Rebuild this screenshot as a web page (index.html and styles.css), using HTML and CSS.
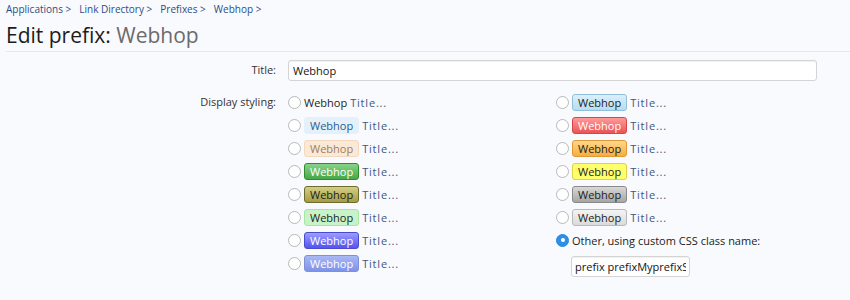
FILE: index.html
```html
<!DOCTYPE html>
<html>
<head>
<meta charset="utf-8">
<link rel="stylesheet" href="styles.css">
</head>
<body>
<div class="page">
  <nav class="crumbs">
    <a>Applications &gt;</a>
    <a>Link Directory &gt;</a>
    <a>Prefixes &gt;</a>
    <a>Webhop &gt;</a>
  </nav>
  <h1 class="title">Edit prefix: <span class="muted">Webhop</span></h1>
  <form class="form">
    <label class="lbl lbl-title">Title:</label>
    <div class="ctrl"><input class="text-in" type="text" value="Webhop"></div>

    <label class="lbl lbl-display">Display styling:</label>
    <div class="options">
      <div class="opt"><span class="radio"></span><span class="plain">Webhop</span><span class="tt">Title...</span></div>
      <div class="opt"><span class="radio"></span><span class="badge b-sky">Webhop</span><span class="tt">Title...</span></div>

      <div class="opt"><span class="radio"></span><span class="badge b-ltblue">Webhop</span><span class="tt">Title...</span></div>
      <div class="opt"><span class="radio"></span><span class="badge b-red">Webhop</span><span class="tt">Title...</span></div>

      <div class="opt"><span class="radio"></span><span class="badge b-peach">Webhop</span><span class="tt">Title...</span></div>
      <div class="opt"><span class="radio"></span><span class="badge b-orange">Webhop</span><span class="tt">Title...</span></div>

      <div class="opt"><span class="radio"></span><span class="badge b-green">Webhop</span><span class="tt">Title...</span></div>
      <div class="opt"><span class="radio"></span><span class="badge b-yellow">Webhop</span><span class="tt">Title...</span></div>

      <div class="opt"><span class="radio"></span><span class="badge b-olive">Webhop</span><span class="tt">Title...</span></div>
      <div class="opt"><span class="radio"></span><span class="badge b-gray">Webhop</span><span class="tt">Title...</span></div>

      <div class="opt"><span class="radio"></span><span class="badge b-ltgreen">Webhop</span><span class="tt">Title...</span></div>
      <div class="opt"><span class="radio"></span><span class="badge b-silver">Webhop</span><span class="tt">Title...</span></div>

      <div class="opt"><span class="radio"></span><span class="badge b-royal">Webhop</span><span class="tt">Title...</span></div>
      <div class="opt"><span class="radio checked"></span><span class="other">Other, using custom CSS class name:</span></div>

      <div class="opt"><span class="radio"></span><span class="badge b-periwinkle">Webhop</span><span class="tt">Title...</span></div>
      <div class="opt opt-custom"><input class="text-in custom-in" type="text" value="prefix prefixMyprefixSHOW"></div>
    </div>
  </form>
</div>
</body>
</html>
```

FILE: styles.css
```css
html, body {
  margin: 0;
  padding: 0;
  background: #f9fafd;
}
body {
  font-family: "Open Sans", "DejaVu Sans", sans-serif;
  font-size: 11px;
  color: #141414;
}
.page {
  padding: 3px 0 0 6px;
}
.crumbs {
  display: flex;
  gap: 8px;
  font-size: 10px;
  line-height: 13px;
  color: #2b4d86;
}
.title {
  margin: 6px 0 0 0;
  font-size: 21px;
  line-height: 26px;
  font-weight: normal;
  color: #1c1c1c;
  padding-bottom: 3px;
  border-bottom: 1px solid #dfecef;
}
.title .muted {
  color: #6b6b6b;
}
.form {
  display: grid;
  grid-template-columns: 270px 1fr;
  column-gap: 12px;
  row-gap: 0;
  margin-top: 8px;
  width: 810px;
}
.lbl {
  text-align: right;
  color: #333;
  line-height: 20px;
}
.lbl-display {
  margin-top: 12px;
  line-height: 18px;
}
.text-in {
  box-sizing: border-box;
  height: 21px;
  width: 529px;
  border: 1px solid #d4d4d4;
  border-radius: 3px;
  background: #fff;
  font-family: inherit;
  font-size: 11px;
  color: #141414;
  padding: 0 4px;
  box-shadow: inset 0 1px 1px rgba(0,0,0,0.06);
  outline: none;
}
.options {
  margin-top: 12px;
  display: grid;
  grid-template-columns: 268px 260px;
  grid-auto-rows: 23px;
}
.opt {
  display: flex;
  align-items: center;
  height: 18px;
}
.radio {
  box-sizing: border-box;
  width: 13px;
  height: 13px;
  border-radius: 50%;
  border: 1px solid #b9b9b9;
  background: #fff;
  margin-right: 2px;
  flex: none;
}
.radio.checked {
  background: #2d8fea;
  border-color: #2a86dc;
  display: flex;
  align-items: center;
  justify-content: center;
}
.radio.checked::after {
  content: "";
  width: 4px;
  height: 4px;
  border-radius: 50%;
  background: #fff;
}
.plain {
  margin: 0 3px 0 1px;
  color: #1c1c1c;
}
.tt {
  color: #3f5783;
  letter-spacing: 0.8px;
}
.other {
  margin-left: 1px;
  color: #1c1c1c;
}
.badge {
  box-sizing: border-box;
  height: 17px;
  line-height: 15px;
  padding: 0 5px;
  border: 1px solid transparent;
  border-radius: 3px;
  margin: 0 3px 0 1px;
  color: #1c1c1c;
}
.b-ltblue { background: #e4f1fb; border-color: #e4f1fb; color: #2b5a8d; }
.b-peach { background: #fbe9d8; border-color: #f4d8bd; color: #9d7d5f; }
.b-green { background: linear-gradient(#89d389, #45a845); border-color: #2f8c2f; color: #fff; }
.b-olive { background: linear-gradient(#d4cf85, #a39d45); border-color: #6f6b2c; color: #1c1c1c; }
.b-ltgreen { background: #c8f3c8; border-color: #a6e5a6; color: #1c1c1c; }
.b-royal { background: linear-gradient(#9c9cff, #5454f0); border-color: #4a4acc; color: #fff; }
.b-periwinkle { background: linear-gradient(#a9b8f5, #7d93e8); border-color: #7f90d6; color: #fff; }
.b-sky { background: linear-gradient(#dcf0fb, #b6dcf1); border-color: #8fbfda; color: #1c1c1c; }
.b-red { background: linear-gradient(#ff9a9a, #ec5454); border-color: #d24848; color: #fff; }
.b-orange { background: linear-gradient(#ffd88c, #f6ad3e); border-color: #e09a35; color: #1c1c1c; }
.b-yellow { background: #ffff6c; border-color: #dcd34c; color: #1c1c1c; }
.b-gray { background: linear-gradient(#d8d8d8, #a6a6a6); border-color: #8a8a8a; color: #1c1c1c; }
.b-silver { background: linear-gradient(#f4f4f4, #dadada); border-color: #b9b9b9; color: #1c1c1c; }
.opt-custom {
  height: 21px;
  margin-top: 2px;
  padding-left: 15px;
}
.custom-in {
  width: 119px;
  padding: 0 3px;
}
```
